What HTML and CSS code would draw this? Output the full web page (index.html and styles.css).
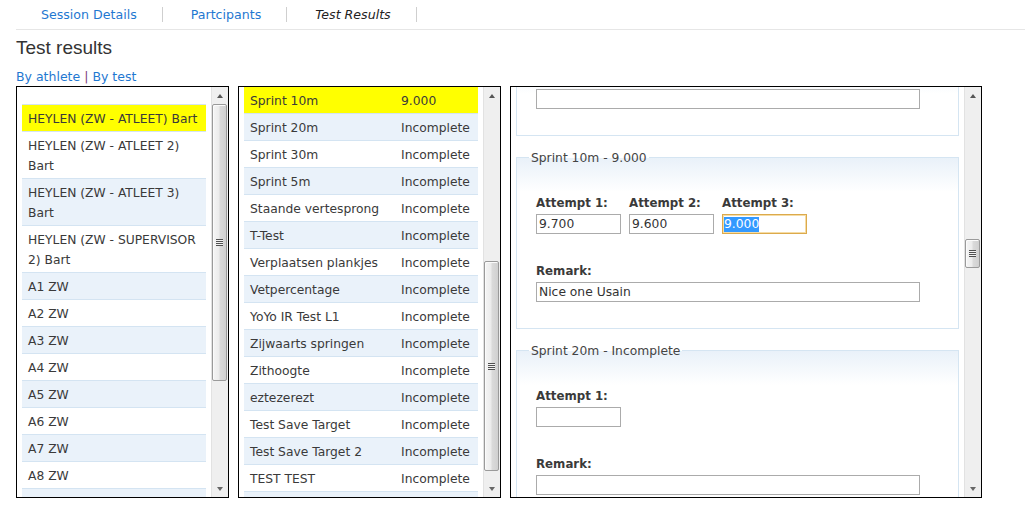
FILE: index.html
```html
<!DOCTYPE html>
<html lang="nl">
<head>
<meta charset="utf-8">
<title>Test results</title>
<link rel="stylesheet" href="styles.css">
</head>
<body>
<div class="page">
  <nav class="tabs">
    <a class="tab" href="#">Session Details</a>
    <a class="tab" href="#">Partcipants</a>
    <span class="tab tab-current">Test Results</span>
  </nav>

  <h1 class="title">Test results</h1>
  <div class="views"><a href="#">By athlete</a> <span class="pipe">|</span> <a href="#">By test</a></div>

  <div class="panes">
    <!-- athletes -->
    <div class="pane pane-athletes">
      <div class="pane-body">
        <ul class="list list-athletes">
          <li class="row is-selected">HEYLEN (ZW - ATLEET) Bart</li>
          <li class="row">HEYLEN (ZW - ATLEET 2) Bart</li>
          <li class="row alt">HEYLEN (ZW - ATLEET 3) Bart</li>
          <li class="row">HEYLEN (ZW - SUPERVISOR 2) Bart</li>
          <li class="row alt">A1 ZW</li>
          <li class="row">A2 ZW</li>
          <li class="row alt">A3 ZW</li>
          <li class="row">A4 ZW</li>
          <li class="row alt">A5 ZW</li>
          <li class="row">A6 ZW</li>
          <li class="row alt">A7 ZW</li>
          <li class="row">A8 ZW</li>
          <li class="row alt"></li>
        </ul>
      </div>
      <div class="sb">
        <span class="sb-btn sb-up"></span>
        <div class="sb-track"><span class="sb-thumb" style="margin-top:0;height:277px"></span></div>
        <span class="sb-btn sb-down"></span>
      </div>
    </div>

    <!-- tests -->
    <div class="pane pane-tests">
      <div class="pane-body">
        <ul class="list list-tests">
          <li class="row test-row is-selected"><span>Sprint 10m</span><span>9.000</span></li>
          <li class="row test-row alt"><span>Sprint 20m</span><span>Incomplete</span></li>
          <li class="row test-row"><span>Sprint 30m</span><span>Incomplete</span></li>
          <li class="row test-row alt"><span>Sprint 5m</span><span>Incomplete</span></li>
          <li class="row test-row"><span>Staande vertesprong</span><span>Incomplete</span></li>
          <li class="row test-row alt"><span>T-Test</span><span>Incomplete</span></li>
          <li class="row test-row"><span>Verplaatsen plankjes</span><span>Incomplete</span></li>
          <li class="row test-row alt"><span>Vetpercentage</span><span>Incomplete</span></li>
          <li class="row test-row"><span>YoYo IR Test L1</span><span>Incomplete</span></li>
          <li class="row test-row alt"><span>Zijwaarts springen</span><span>Incomplete</span></li>
          <li class="row test-row"><span>Zithoogte</span><span>Incomplete</span></li>
          <li class="row test-row alt"><span>eztezerezt</span><span>Incomplete</span></li>
          <li class="row test-row"><span>Test Save Target</span><span>Incomplete</span></li>
          <li class="row test-row alt"><span>Test Save Target 2</span><span>Incomplete</span></li>
          <li class="row test-row"><span>TEST TEST</span><span>Incomplete</span></li>
          <li class="row test-row alt"></li>
        </ul>
      </div>
      <div class="sb">
        <span class="sb-btn sb-up"></span>
        <div class="sb-track"><span class="sb-thumb" style="margin-top:157px;height:210px"></span></div>
        <span class="sb-btn sb-down"></span>
      </div>
    </div>

    <!-- results -->
    <div class="pane pane-results">
      <div class="pane-body">
        <div class="results-scroll" style="margin-top:-28px">
          <fieldset class="test">
            <div class="remark"><input class="field field-wide" type="text" value="" aria-label="Remark"></div>
          </fieldset>

          <fieldset class="test">
            <legend class="test-title">Sprint 10m - 9.000</legend>
            <div class="attempts">
              <div class="attempt"><label class="label">Attempt 1:</label><input class="field" type="text" value="9.700"></div>
              <div class="attempt"><label class="label">Attempt 2:</label><input class="field" type="text" value="9.600"></div>
              <div class="attempt"><label class="label">Attempt 3:</label><span class="field field-focused"><span class="selection">9.000</span></span></div>
            </div>
            <div class="remark"><label class="label">Remark:</label><input class="field field-wide" type="text" value="Nice one Usain"></div>
          </fieldset>

          <fieldset class="test">
            <legend class="test-title">Sprint 20m - Incomplete</legend>
            <div class="attempts">
              <div class="attempt"><label class="label">Attempt 1:</label><input class="field" type="text" value=""></div>
            </div>
            <div class="remark"><label class="label">Remark:</label><input class="field field-wide" type="text" value=""></div>
          </fieldset>
        </div>
      </div>
      <div class="sb">
        <span class="sb-btn sb-up"></span>
        <div class="sb-track"><span class="sb-thumb" style="margin-top:135px;height:29px"></span></div>
        <span class="sb-btn sb-down"></span>
      </div>
    </div>
  </div>
</div>
</body>
</html>
```

FILE: styles.css
```css
body {
  margin: 0;
  background: #fff;
  color: #333;
  font-family: "DejaVu Sans", Verdana, sans-serif;
}

.page {
  padding: 0 4px 0 16px;
}

/* top tabs */
.tabs {
  display: flex;
  padding: 7px 0;
  border-bottom: 1px solid #e6e6e6;
}

.tab {
  padding: 0 25px 0 28px;
  border-right: 1px solid #cfcfcf;
  font-size: 12.6px;
  line-height: 15px;
  color: #1f78d1;
  text-decoration: none;
}

.tab:first-child {
  padding-left: 25px;
}

.tab-current {
  font-style: italic;
  color: #222;
}

.title {
  margin: 7px 0 0;
  font-family: "Liberation Sans", Arial, sans-serif;
  font-weight: normal;
  font-size: 19px;
  line-height: 22px;
  color: #333;
}

.views {
  margin-top: 10px;
  font-size: 12.5px;
  line-height: 16px;
}

.views a {
  color: #1f78d1;
  text-decoration: none;
}

.pipe {
  color: #80407a;
}

/* panes */
.panes {
  display: flex;
  gap: 9px;
  margin-top: 1px;
}

.pane {
  box-sizing: border-box;
  height: 412px;
  border: 1px solid #000;
  display: flex;
}

.pane-athletes { width: 213px; }
.pane-tests { width: 263px; }
.pane-results { width: 472px; }

.pane-body {
  flex: 1;
  min-width: 0;
  overflow: hidden;
  padding: 0 5px;
}

/* lists */
.list {
  list-style: none;
  margin: 0;
  padding: 0;
}

.list-athletes {
  padding-top: 17px;
}

.list-tests {
  margin-top: -1px;
}

.row {
  min-height: 20px;
  border-top: 1px solid #d4e4f2;
  padding: 4px 6px 2px;
  font-size: 12.3px;
  line-height: 20px;
  color: #3a3a3a;
  background: #fff;
}

.row.alt {
  background: #eaf2fa;
}

.row.is-selected {
  background: #ffff00;
}

.test-row {
  display: grid;
  grid-template-columns: 151px 1fr;
  white-space: nowrap;
}

/* fake scrollbars */
.sb {
  box-sizing: border-box;
  width: 17px;
  flex: none;
  display: flex;
  flex-direction: column;
  border-left: 1px solid #e2e2e2;
  background: #efefef;
}

.sb-btn {
  flex: none;
  height: 17px;
  display: flex;
  align-items: center;
  justify-content: center;
}

.sb-up::before {
  content: "";
  border-left: 3.5px solid transparent;
  border-right: 3.5px solid transparent;
  border-bottom: 4px solid #555;
}

.sb-down::before {
  content: "";
  border-left: 3.5px solid transparent;
  border-right: 3.5px solid transparent;
  border-top: 4px solid #666;
}

.sb-track {
  flex: 1;
  min-height: 0;
}

.sb-thumb {
  box-sizing: border-box;
  width: 15px;
  display: flex;
  align-items: center;
  justify-content: center;
  border: 1px solid #9a9a9a;
  border-radius: 2px;
  background: linear-gradient(to right, #f5f5f5, #ececec 45%, #dadada 55%, #d0d0d0);
  box-shadow: inset 1px 1px 0 #fbfbfb;
}

.sb-thumb::before {
  content: "";
  width: 7px;
  height: 7px;
  background: repeating-linear-gradient(#505050 0 1px, #f2f2f2 1px 2px);
}

/* results */
.test {
  min-width: 0;
  margin: 0 0 13px;
  padding: 0 12px 26px;
  border: 1px solid #d5e5f2;
  background: linear-gradient(#e9f1f9, #fff 34px);
}

.test-title {
  padding: 2px 2px 0;
  font-size: 12.3px;
  line-height: 15px;
  color: #444;
}

.attempts {
  display: flex;
  gap: 8px;
  padding: 29px 0 0 7px;
}

.attempt,
.remark {
  display: flex;
  flex-direction: column;
  align-items: flex-start;
  gap: 3px;
}

.remark {
  padding: 29px 0 0 7px;
}

.label {
  display: block;
  font-weight: bold;
  font-size: 11.8px;
  line-height: 16px;
  color: #3a3a3a;
}

.field {
  box-sizing: border-box;
  display: block;
  width: 85px;
  height: 20px;
  margin: 0;
  padding: 0 2px;
  border: 1px solid #ababab;
  border-radius: 0;
  background: #fff;
  outline: none;
  font-family: "DejaVu Sans", Verdana, sans-serif;
  font-size: 12.3px;
  color: #333;
}

.field-wide {
  width: 384px;
}

.field-focused {
  display: flex;
  align-items: center;
  padding-left: 1px;
  border-color: #dcaa4c;
  box-shadow: inset 0 0 0 1px #f5dca6;
}

.selection {
  background: #3399ff;
  color: #fff;
  line-height: 15px;
}
```
